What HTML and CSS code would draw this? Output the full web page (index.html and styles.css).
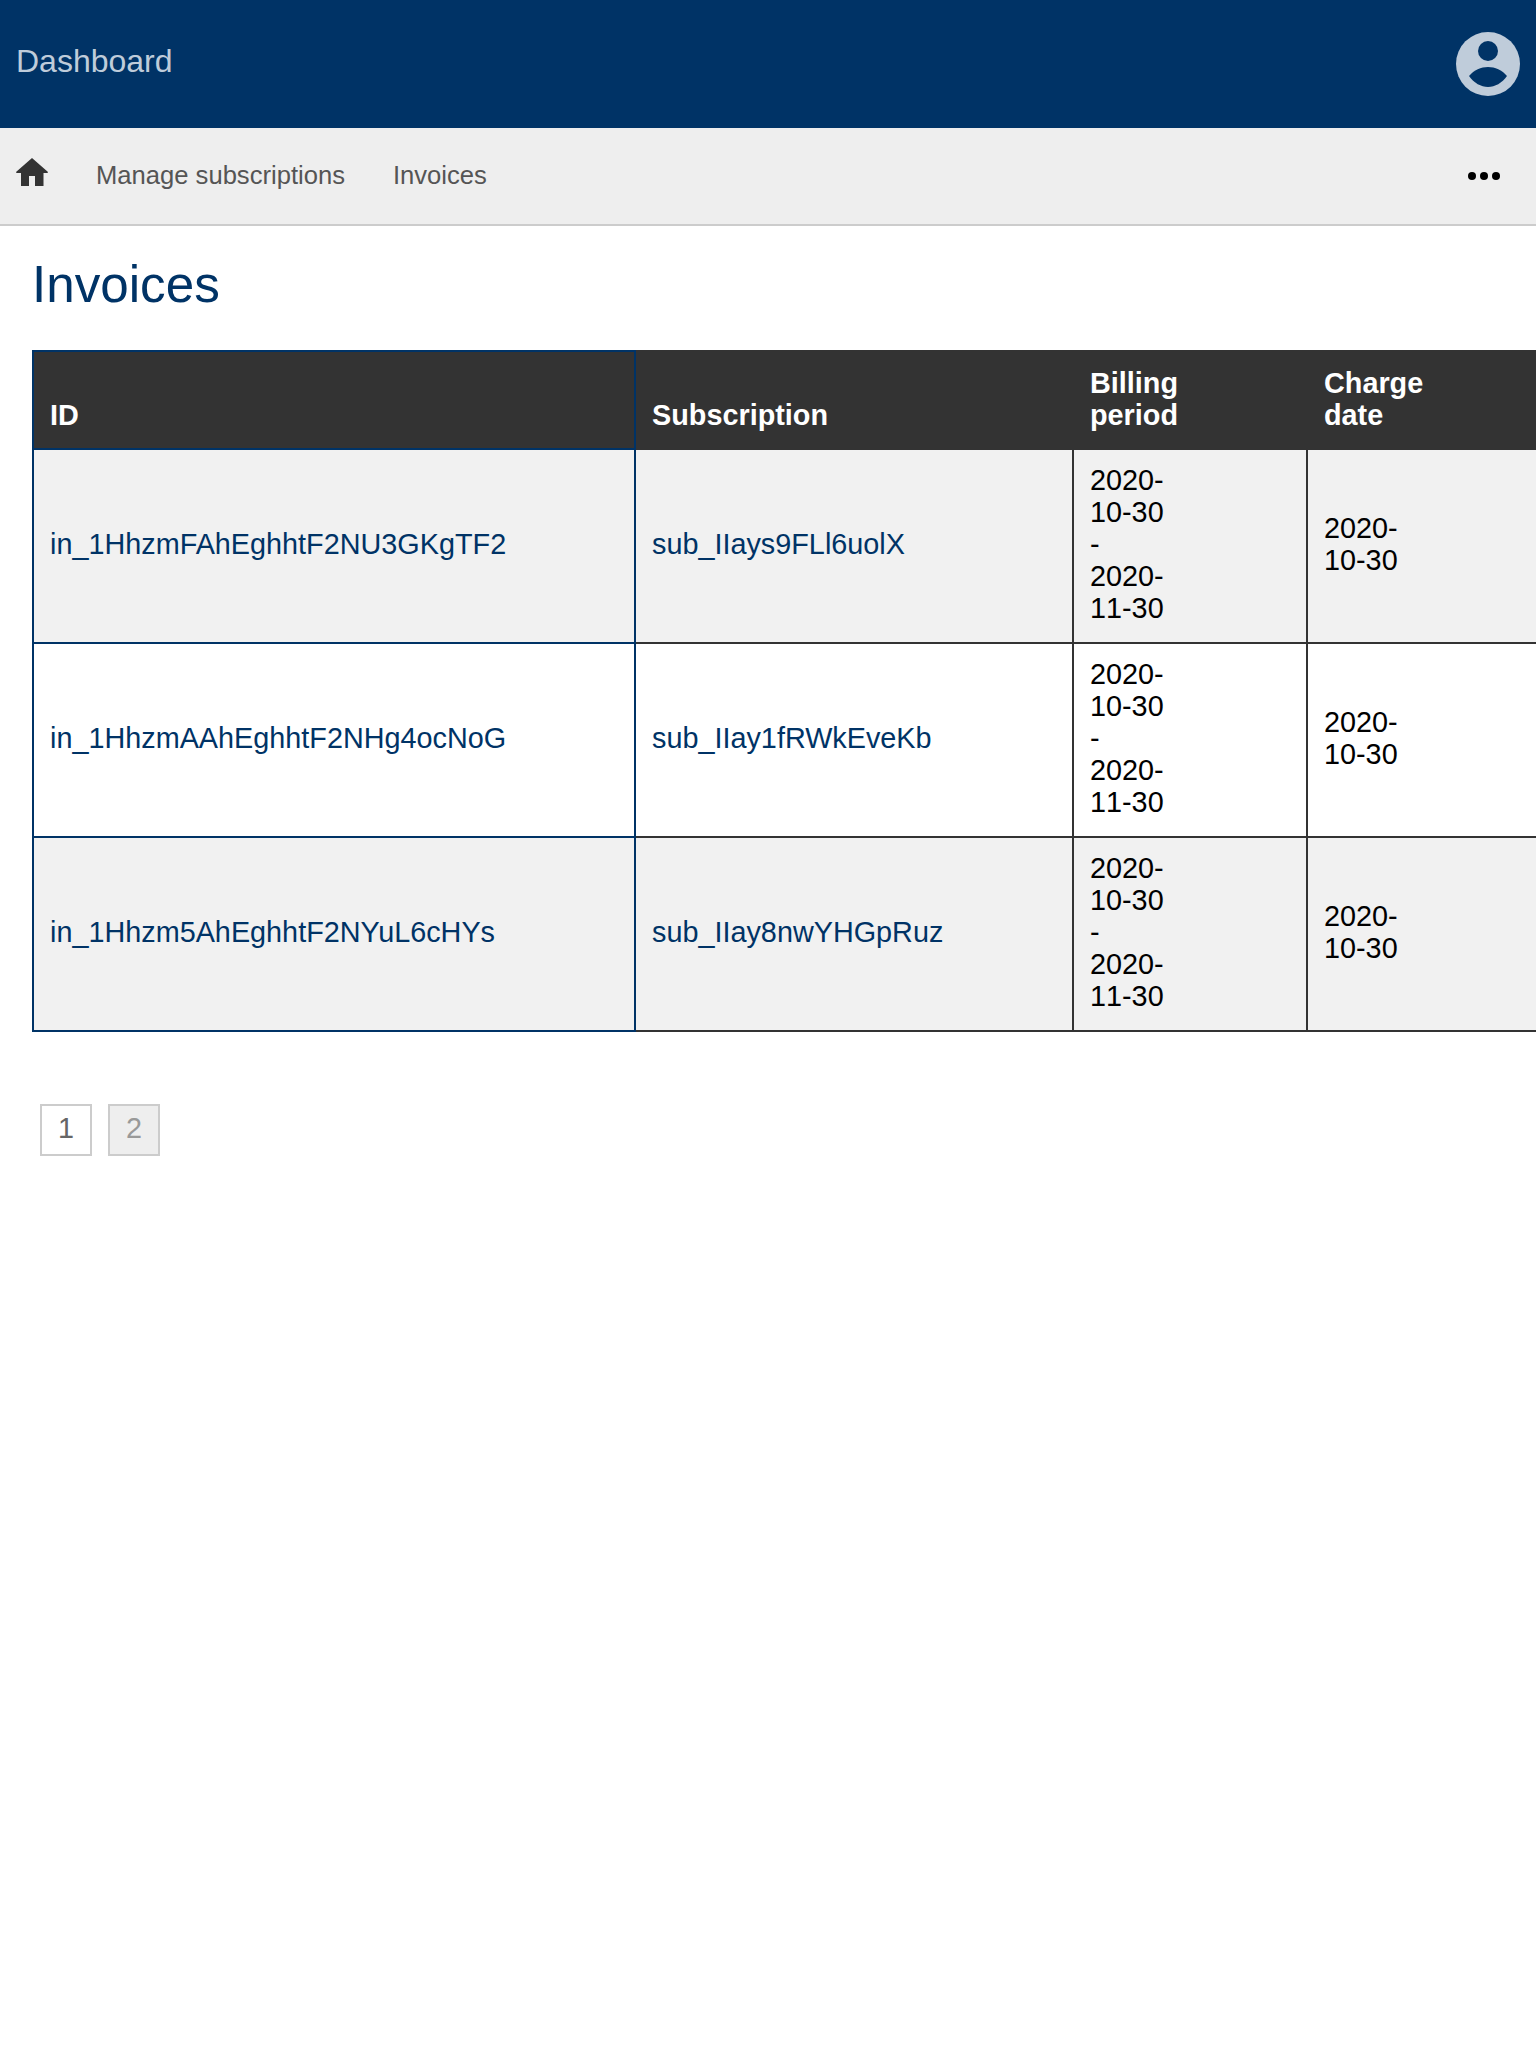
FILE: index.html
```html
<!DOCTYPE html>
<html lang="en">
  <head>
    <meta charset="UTF-8" />
    <meta name="viewport" content="width=device-width, initial-scale=1.0" />
    <title>Invoices</title>
    <link rel="stylesheet" href="styles.css">
  </head>
  <body>
    <header class="topbar">
      <a class="brand" href="#">Dashboard</a>
      <svg class="avatar" viewBox="0 0 64 64" aria-hidden="true">
        <circle cx="32" cy="32" r="32" fill="#bfccda" />
        <circle cx="32" cy="19" r="10" fill="#003366" />
        <path d="M13 44C18 38 25 35 32 35S46 38 51 44C46 51 39 55 32 55S18 51 13 44Z" fill="#003366" />
      </svg>
    </header>

    <nav class="navbar">
      <a class="nav-home" href="#">
        <svg viewBox="0 0 32 28" aria-hidden="true">
          <path d="M16 0 32 14 31.500 15H27.500V28H19V18H13V28H5V15H.5L0 14Z" fill="#333" />
        </svg>
      </a>
      <a class="nav-link" href="#">Manage subscriptions</a>
      <a class="nav-link" href="#">Invoices</a>
      <span class="nav-more"><i></i><i></i><i></i></span>
    </nav>

    <main class="content">
      <h1>Invoices</h1>

      <div class="table-wrap">
        <table class="invoices">
          <colgroup>
            <col class="col-id" />
            <col class="col-sub" />
            <col class="col-date" />
            <col class="col-date" />
          </colgroup>
          <thead>
            <tr>
              <th>ID</th>
              <th>Subscription</th>
              <th>Billing period</th>
              <th>Charge date</th>
            </tr>
          </thead>
          <tbody>
            <tr>
              <td><a href="#">in_1HhzmFAhEghhtF2NU3GKgTF2</a></td>
              <td><a href="#">sub_IIays9FLl6uolX</a></td>
              <td>2020-10-30<br />-<br />2020-11-30</td>
              <td>2020-10-30</td>
            </tr>
            <tr>
              <td><a href="#">in_1HhzmAAhEghhtF2NHg4ocNoG</a></td>
              <td><a href="#">sub_IIay1fRWkEveKb</a></td>
              <td>2020-10-30<br />-<br />2020-11-30</td>
              <td>2020-10-30</td>
            </tr>
            <tr>
              <td><a href="#">in_1Hhzm5AhEghhtF2NYuL6cHYs</a></td>
              <td><a href="#">sub_IIay8nwYHGpRuz</a></td>
              <td>2020-10-30<br />-<br />2020-11-30</td>
              <td>2020-10-30</td>
            </tr>
          </tbody>
        </table>
      </div>

      <div class="pagination">
        <a class="page" href="#">1</a>
        <span class="page page-current">2</span>
      </div>
    </main>
  </body>
</html>
```

FILE: styles.css
```css
/* Base */
body { margin: 0; font-family: "Liberation Sans", Arial, sans-serif; font-size: 25.6px; background: #fff; color: #000; overflow-x: hidden; }
a { text-decoration: none; }

/* Top bar */
.topbar { display: flex; justify-content: space-between; align-items: center; height: 128px; padding: 0 16px; box-sizing: border-box; background: #003366; }
.brand { font-size: 32px; color: #bfccda; margin-top: -6px; }
.avatar { display: block; width: 64px; height: 64px; }

/* Nav */
.navbar { display: flex; align-items: center; height: 98px; box-sizing: border-box; padding: 0 16px; background: #eee; border-bottom: 2px solid #ccc; }
.nav-home { display: block; width: 32px; height: 28px; margin: -8px 32px 0 0; }
.nav-home svg { display: block; width: 32px; height: 28px; }
.nav-link { color: #555; margin: -2px 0 0 16px; padding-right: 32px; }
.nav-more { display: flex; gap: 4px; margin-left: auto; padding-right: 20px; }
.nav-more i { display: block; width: 8px; height: 8px; border-radius: 50%; background: #000; }

/* Content */
.content { padding: 0 0 0 32px; }
h1 { margin: 0; padding: 29px 0 35px; font-size: 51.2px; line-height: 60px; font-weight: normal; color: #003366; }

/* Table */
.table-wrap { overflow: hidden; }
.invoices { border-collapse: collapse; table-layout: fixed; width: 1508px; font-size: 28.8px; line-height: 32px; }
.col-id { width: 602px; }
.col-sub { width: 438px; }
.col-date { width: 234px; }
.invoices th { padding: 15px 16px 17px; border: 2px solid #333; background: #333; color: #fff; text-align: left; vertical-align: bottom; }
.invoices td { padding: 14px 16px 18px; border: 2px solid #333; vertical-align: middle; }
.invoices th:first-child, .invoices td:first-child { border-color: #003366; }
/* the date columns are narrow enough in the original to wrap */
.invoices th:nth-child(n+3), .invoices td:nth-child(n+3) { padding-right: 116px; font-kerning: none; }
.invoices tbody tr:nth-child(odd) { background: #f1f1f1; }
.invoices a { color: #003366; }

/* Pagination */
.pagination { display: flex; gap: 16px; margin: 72px 0 0 8px; }
.page { display: block; width: 52px; height: 52px; box-sizing: border-box; border: 2px solid #ccc; text-align: center; line-height: 44px; font-size: 28.8px; color: #666; }
.page-current { background: #eee; color: #999; }
```
